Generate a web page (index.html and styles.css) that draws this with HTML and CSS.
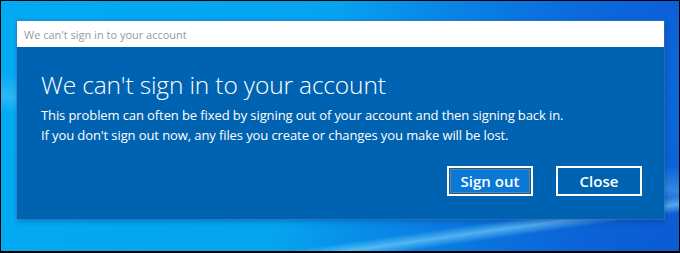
FILE: index.html
```html
<!DOCTYPE html>
<html lang="en">
<head>
<meta charset="utf-8">
<title>We can't sign in to your account</title>
<link rel="stylesheet" href="styles.css">
</head>
<body>
<div class="frame">
  <div class="dialog">
    <div class="titlebar">We can't sign in to your account</div>
    <div class="content">
      <h1 class="heading">We can't sign in to your account</h1>
      <p class="message">This problem can often be fixed by signing out of your account and then signing back in.<br>If you don't sign out now, any files you create or changes you make will be lost.</p>
      <div class="actions">
        <button class="btn btn-primary"><span class="btn-inner">Sign out</span></button>
        <button class="btn"><span class="btn-inner">Close</span></button>
      </div>
    </div>
  </div>
</div>
</body>
</html>
```

FILE: styles.css
```css
html, body {
  margin: 0;
  padding: 0;
  background: #000;
}

.frame {
  box-sizing: border-box;
  width: 680px;
  height: 253px;
  border: 1px solid #000;
  border-bottom-width: 2px;
  overflow: hidden;
  padding: 20px 0 0 16px;
  background:
    linear-gradient(172deg, transparent 0%, transparent 84%, rgba(140, 225, 255, 0.55) 86.5%, transparent 89%),
    linear-gradient(8deg, transparent 0%, transparent 40%, rgba(120, 210, 255, 0.35) 45%, transparent 52%),
    radial-gradient(ellipse 60% 90% at 100% 100%, #0b5bd3 0%, rgba(11, 91, 211, 0) 100%),
    radial-gradient(ellipse 50% 60% at 100% 0%, #0c5fd8 0%, rgba(12, 95, 216, 0) 100%),
    linear-gradient(100deg, #02aaf3 0%, #05a4f0 45%, #0a8ce8 75%, #0b6edd 100%);
  font-family: "Open Sans", "Noto Sans", sans-serif;
}

.dialog {
  width: 647px;
  height: 198px;
  display: flex;
  flex-direction: column;
  background: #0063b1;
  box-shadow: 0 0 0 1px rgba(60, 120, 190, 0.55), 1px 2px 6px rgba(0, 30, 80, 0.35);
}

.titlebar {
  height: 26px;
  flex: none;
  background: #fff;
  color: #9a9a9a;
  font-size: 11px;
  line-height: 27px;
  padding-left: 7px;
  white-space: nowrap;
}

.content {
  flex: 1;
  display: flex;
  flex-direction: column;
  padding: 0 22px 23px 24px;
  color: #fff;
}

.heading {
  margin: 22px 0 0;
  font-size: 24.5px;
  font-weight: 300;
  line-height: 32px;
  letter-spacing: -0.15px;
}

.message {
  margin: 4px 0 0;
  font-size: 13px;
  line-height: 20px;
  letter-spacing: -0.1px;
  white-space: nowrap;
}

.actions {
  margin-top: auto;
  display: flex;
  justify-content: flex-end;
  gap: 23px;
}

.btn {
  box-sizing: border-box;
  width: 86px;
  height: 30px;
  padding: 1px;
  margin: 0;
  border: 2px solid #fff;
  background: transparent;
  color: #fff;
  font-family: inherit;
  font-size: 15px;
  font-weight: 600;
  display: flex;
}

.btn-inner {
  box-sizing: border-box;
  flex: 1;
  display: flex;
  align-items: center;
  justify-content: center;
  border: 1px solid transparent;
}

.btn-primary .btn-inner {
  background: #0a78d4;
  border-color: #6f7f8f;
}
```
